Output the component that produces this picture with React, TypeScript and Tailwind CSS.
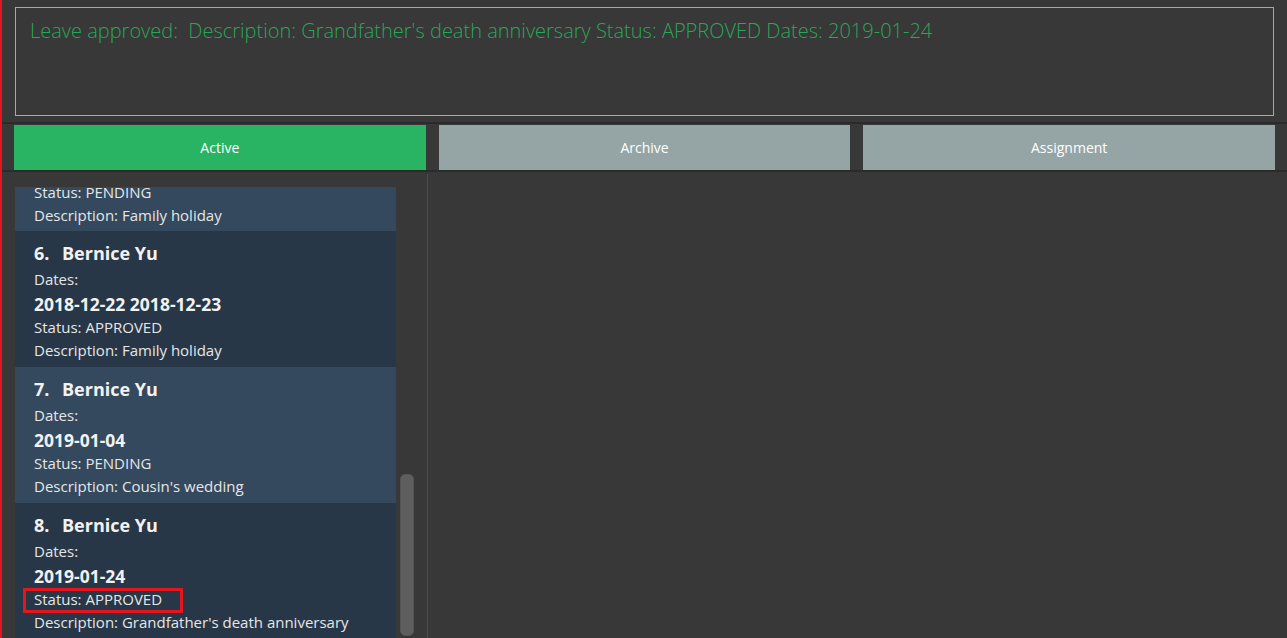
import React from 'react';

interface Leave {
  index: number;
  name: string;
  dates: string;
  status: string;
  description: string;
  highlight?: boolean;
}

const leaves: Leave[] = [
  { index: 6, name: 'Bernice Yu', dates: '2018-12-22 2018-12-23', status: 'APPROVED', description: 'Family holiday' },
  { index: 7, name: 'Bernice Yu', dates: '2019-01-04', status: 'PENDING', description: "Cousin's wedding" },
  { index: 8, name: 'Bernice Yu', dates: '2019-01-24', status: 'APPROVED', description: "Grandfather's death anniversary", highlight: true },
];

const font = { fontFamily: '"Open Sans", "Noto Sans", sans-serif' };

const cardBg = (index: number) => (index % 2 === 1 ? 'bg-[#34495e]' : 'bg-[#283747]');

const LeaveCard: React.FC<{ leave: Leave }> = ({ leave }) => (
  <div className={`${cardBg(leave.index)} h-[136px] pt-[10px] pl-[19px] text-[#f2f2f2]`}>
    <div className="flex text-[18px] font-bold leading-[24px]">
      <span className="w-[28px]">{leave.index}.</span>
      <span>{leave.name}</span>
    </div>
    <div className="text-[15px] leading-[28px] text-[#e6e6e6]">Dates:</div>
    <div className="text-[17.5px] font-bold leading-[22px]">{leave.dates}</div>
    <div className="relative text-[15px] leading-[24px] text-[#e6e6e6]">
      {leave.highlight && (
        <div className="absolute left-[-11px] top-[1px] h-[25px] w-[160px] border-[3px] border-[#e5141d]" />
      )}
      Status: {leave.status}
    </div>
    <div className="text-[15px] leading-[22px] text-[#e6e6e6]">Description: {leave.description}</div>
  </div>
);

const tabs = ['Active', 'Archive', 'Assignment'];

export default function App() {
  return (
    <div
      className="w-[1287px] h-[638px] overflow-hidden bg-[#383838] border-l-2 border-[#e5141d] flex flex-col"
      style={font}
    >
      <div className="pl-[13px] pr-[13px] pt-[7px]">
        <div className="h-[109px] border border-[#a9a9a9] pl-[14px] pt-[6px]">
          <p className="text-[20px] font-light leading-[34px] text-[#2aa65a] whitespace-pre">
            {"Leave approved:  Description: Grandfather's death anniversary Status: APPROVED Dates: 2019-01-24"}
          </p>
        </div>
      </div>

      <div className="mt-[6px] h-[2px] bg-[#2b2b2b]" />

      <div className="mt-[1px] flex h-[45px] gap-[13px] pl-[12px] pr-[12px]">
        {tabs.map((tab, i) => (
          <div
            key={tab}
            className={`flex flex-1 items-center justify-center text-[14px] text-white ${
              i === 0 ? 'bg-[#28b463]' : 'bg-[#95a5a6]'
            }`}
          >
            {tab}
          </div>
        ))}
      </div>

      <div className="h-[2px] bg-[#2b2b2b]" />

      <div className="flex flex-1 min-h-0">
        <div className="flex w-[425px] pl-[13px] pt-[15px]">
          <div className="w-[381px] overflow-hidden">
            {/* tail of card 5, scrolled mostly out of view */}
            <div className="h-[44px] overflow-hidden bg-[#34495e] pl-[19px] text-[#e6e6e6]">
              <div className="mt-[-7px] text-[15px] leading-[24px]">Status: PENDING</div>
              <div className="text-[15px] leading-[22px]">Description: Family holiday</div>
            </div>
            {leaves.map((l) => (
              <LeaveCard key={l.index} leave={l} />
            ))}
          </div>
          <div className="ml-[4px] w-[14px]">
            <div className="mt-[287px] h-[162px] rounded-[5px] bg-[#5e5e5e] border border-[#555]" />
          </div>
        </div>
        <div className="mt-[2px] w-px bg-[#4b4b4b]" />
        <div className="flex-1" />
      </div>
    </div>
  );
}
